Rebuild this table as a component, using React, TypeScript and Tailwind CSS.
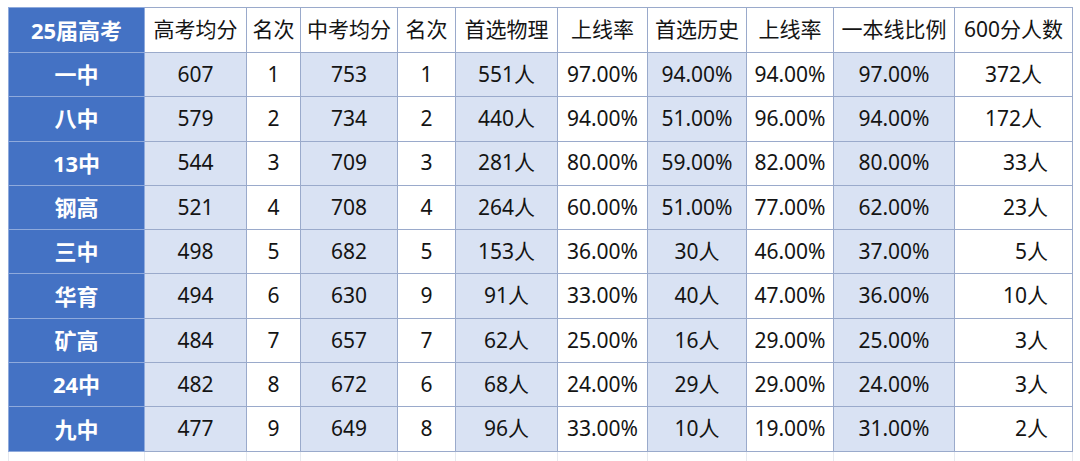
import React from 'react';

type Align = 'c' | 'r';

const headers = ['高考均分', '名次', '中考均分', '名次', '首选物理', '上线率', '首选历史', '上线率', '一本线比例', '600分人数'];

const widths = [136, 102, 54, 97, 58, 102, 90, 99, 87, 121, 118];

// columns with the light blue fill
const shaded = [true, false, true, false, true, false, true, false, true, false];

const rows: { name: string; cells: string[] }[] = [
  { name: '一中', cells: ['607', '1', '753', '1', '551人', '97.00%', '94.00%', '94.00%', '97.00%', '372人'] },
  { name: '八中', cells: ['579', '2', '734', '2', '440人', '94.00%', '51.00%', '96.00%', '94.00%', '172人'] },
  { name: '13中', cells: ['544', '3', '709', '3', '281人', '80.00%', '59.00%', '82.00%', '80.00%', '33人'] },
  { name: '钢高', cells: ['521', '4', '708', '4', '264人', '60.00%', '51.00%', '77.00%', '62.00%', '23人'] },
  { name: '三中', cells: ['498', '5', '682', '5', '153人', '36.00%', '30人', '46.00%', '37.00%', '5人'] },
  { name: '华育', cells: ['494', '6', '630', '9', '91人', '33.00%', '40人', '47.00%', '36.00%', '10人'] },
  { name: '矿高', cells: ['484', '7', '657', '7', '62人', '25.00%', '16人', '29.00%', '25.00%', '3人'] },
  { name: '24中', cells: ['482', '8', '672', '6', '68人', '24.00%', '29人', '29.00%', '24.00%', '3人'] },
  { name: '九中', cells: ['477', '9', '649', '8', '96人', '33.00%', '10人', '19.00%', '31.00%', '2人'] },
];

const font = { fontFamily: '"Noto Sans", "Noto Sans CJK SC", sans-serif' };

const App: React.FC = () => {
  const align = (ri: number, ci: number): Align => (ci === 9 && ri > 1 ? 'r' : 'c');

  return (
    <div className="w-[1080px] h-[461px] overflow-hidden bg-white pt-[7px] pl-[8px]" style={font}>
      <table className="table-fixed border-collapse text-[21px] text-[#141414]">
        <colgroup>
          {widths.map((w, i) => (
            <col key={i} style={{ width: w }} />
          ))}
        </colgroup>
        <thead>
          <tr className="h-[45px]">
            <th className="bg-[#4472C4] text-white text-[22px] font-bold border border-[#8FAADC] text-center">25届高考</th>
            {headers.map((h, i) => (
              <th key={i} className="bg-white font-normal border border-[#9AAACB] text-center whitespace-nowrap">
                {h}
              </th>
            ))}
          </tr>
        </thead>
        <tbody>
          {rows.map((row, ri) => (
            <tr key={ri} className="h-[44.3px]">
              <td className="bg-[#4472C4] text-white text-[22px] font-bold border border-[#8FAADC] text-center">
                {row.name}
              </td>
              {row.cells.map((c, ci) => (
                <td
                  key={ci}
                  className={`border border-[#9AAACB] whitespace-nowrap ${shaded[ci] ? 'bg-[#D9E2F3]' : 'bg-white'} ${
                    align(ri, ci) === 'r' ? 'text-right pr-[24px]' : 'text-center'
                  }`}
                >
                  {c}
                </td>
              ))}
            </tr>
          ))}
          <tr className="h-[44px]">
            <td className="border-x border-[#E6E9EF]" />
            {headers.map((_, i) => (
              <td key={i} className="border-x border-[#E6E9EF]" />
            ))}
          </tr>
        </tbody>
      </table>
    </div>
  );
};

export default App;
